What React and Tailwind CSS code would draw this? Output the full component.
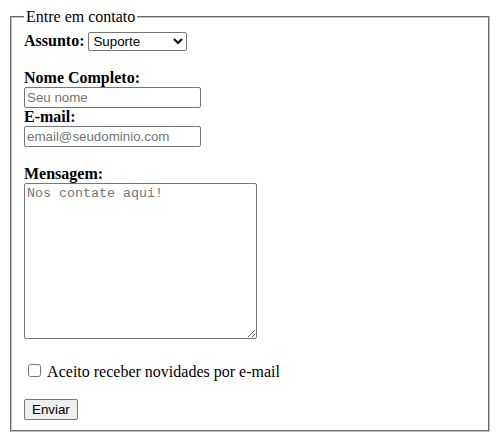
const App = () => {
  return (
    <div className="p-2 bg-white text-black font-['Liberation_Serif','Times_New_Roman',serif] text-base leading-[normal]">
      <form>
        <fieldset className="mx-0.5 border-2 [border-style:groove] border-[#c0c0c0] px-3 pt-[5.6px] pb-[10px] min-w-0">
          <legend className="px-0.5">Entre em contato</legend>

          {/* Assunto */}
          <label className="font-bold" htmlFor="assunto">Assunto: </label>
          <select
            id="assunto"
            defaultValue="suporte"
            className="w-[99px] h-[19px] border border-[#767676] rounded-[2px] bg-white text-[13.333px] font-['Liberation_Sans',Arial,sans-serif]"
          >
            <option value="suporte">Suporte</option>
            <option value="vendas">Vendas</option>
            <option value="outro">Outro</option>
          </select>
          <br />
          <br />

          {/* Nome */}
          <label className="font-bold" htmlFor="nome">Nome Completo:</label>
          <br />
          <input
            id="nome"
            type="text"
            placeholder="Seu nome"
            className="w-[177px] h-[21px] border border-[#767676] rounded-[2px] px-[2px] py-[1px] bg-white text-[13.333px] font-['Liberation_Sans',Arial,sans-serif] placeholder:text-[#757575]"
          />
          <br />

          {/* Email */}
          <label className="font-bold" htmlFor="email">E-mail:</label>
          <br />
          <input
            id="email"
            type="email"
            placeholder="email@seudominio.com"
            className="w-[177px] h-[21px] border border-[#767676] rounded-[2px] px-[2px] py-[1px] bg-white text-[13.333px] font-['Liberation_Sans',Arial,sans-serif] placeholder:text-[#757575]"
          />
          <br />
          <br />

          {/* Mensagem */}
          <label className="font-bold" htmlFor="msg">Mensagem:</label>
          <br />
          <textarea
            id="msg"
            placeholder="Nos contate aqui!"
            className="w-[233px] h-[156px] border border-[#767676] rounded-[2px] p-[2px] bg-white text-[13.333px] font-['Liberation_Mono','DejaVu_Sans_Mono',monospace] placeholder:text-[#757575]"
          />
          <br />
          <br />

          {/* Newsletter */}
          <input id="news" type="checkbox" className="w-[13px] h-[13px] mt-[3px] mr-[3px] mb-[3px] ml-1" />
          <label htmlFor="news"> Aceito receber novidades por e-mail</label>
          <br />
          <br />

          <button
            type="submit"
            className="h-[21px] bg-[#efefef] border border-[#767676] rounded-[2px] px-[7px] py-[1px] text-[13.333px] font-['Liberation_Sans',Arial,sans-serif]"
          >
            Enviar
          </button>
        </fieldset>
      </form>
    </div>
  );
};

export default App;
